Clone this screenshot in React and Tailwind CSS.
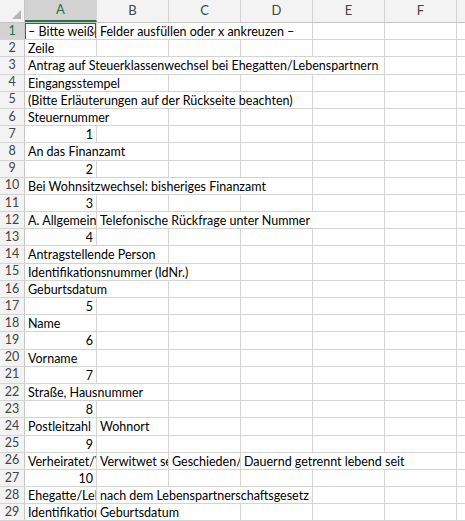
const rows = [
  ["– Bitte weiße", "Felder ausfüllen oder x ankreuzen –"],
  ["Zeile"],
  ["Antrag auf Steuerklassenwechsel bei Ehegatten/Lebenspartnern"],
  ["Eingangsstempel"],
  ["(Bitte Erläuterungen auf der Rückseite beachten)"],
  ["Steuernummer"],
  [1],
  ["An das Finanzamt"],
  [2],
  ["Bei Wohnsitzwechsel: bisheriges Finanzamt"],
  [3],
  ["A. Allgemeine Angaben", "Telefonische Rückfrage unter Nummer"],
  [4],
  ["Antragstellende Person"],
  ["Identifikationsnummer (IdNr.)"],
  ["Geburtsdatum"],
  [5],
  ["Name"],
  [6],
  ["Vorname"],
  [7],
  ["Straße, Hausnummer"],
  [8],
  ["Postleitzahl", "Wohnort"],
  [9],
  ["Verheiratet/Verpartnert seit", "Verwitwet seit", "Geschieden/Lebenspartnerschaft aufgehoben seit", "Dauernd getrennt lebend seit"],
  [10],
  ["Ehegatte/Lebenspartner", "nach dem Lebenspartnerschaftsgesetz"],
  ["Identifikationsnummer", "Geburtsdatum"],
  [11],
];
const cols = ["A", "B", "C", "D", "E", "F"];

function Cell({ value, clip, selected }) {
  const num = typeof value === "number";
  return (
    <div className={`relative w-[72px] shrink-0 h-full border-r border-[#d4d4d4] ${clip ? "overflow-hidden" : ""}`}>
      {value !== undefined && (
        <span className={`absolute top-0 h-full z-10 whitespace-nowrap px-[3px] leading-[17px] ${num ? "right-0" : "left-0 bg-white"}`}>{value}</span>
      )}
      {selected && <div className="absolute -left-px -top-px w-[73px] h-[19px] border-2 border-[#217346] z-20"><div className="absolute -right-[4px] -bottom-[4px] w-[5px] h-[5px] bg-[#217346] border border-white" /></div>}
    </div>
  );
}

export default function App() {
  return (
    <div className="w-[465px] h-[521px] overflow-hidden bg-white text-[12.5px] text-black" style={{ fontFamily: "Lato, 'Open Sans', sans-serif" }}>
      <div className="flex h-[23px] bg-[#f3f3f3] border-b border-[#c6c6c6] text-[#444] text-[13px]">
        <div className="w-[25px] shrink-0 border-r border-[#c6c6c6] relative">
          <div className="absolute right-[3px] bottom-[3px] w-0 h-0 border-l-[9px] border-l-transparent border-b-[9px] border-b-[#b5b5b5]" />
        </div>
        {cols.map((c) => (
          <div key={c} className={`w-[72px] shrink-0 flex items-center justify-center border-r border-[#d4d4d4] ${c === "A" ? "bg-[#d2d2d2] border-b-2 border-b-[#217346] text-[#217346]" : ""}`}>{c}</div>
        ))}
      </div>
      {rows.map((r, i) => (
        <div key={i} className="flex h-[17.2px] border-b border-[#d4d4d4]">
          <div className={`w-[25px] shrink-0 flex items-center justify-center text-[#444] border-r border-[#c6c6c6] ${i === 0 ? "bg-[#d2d2d2] text-[#217346]" : "bg-[#f3f3f3]"}`}>{i + 1}</div>
          {cols.map((c, j) => (
            <Cell key={c} value={r[j]} clip={r[j + 1] !== undefined} selected={i === 0 && j === 0} />
          ))}
        </div>
      ))}
    </div>
  );
}
